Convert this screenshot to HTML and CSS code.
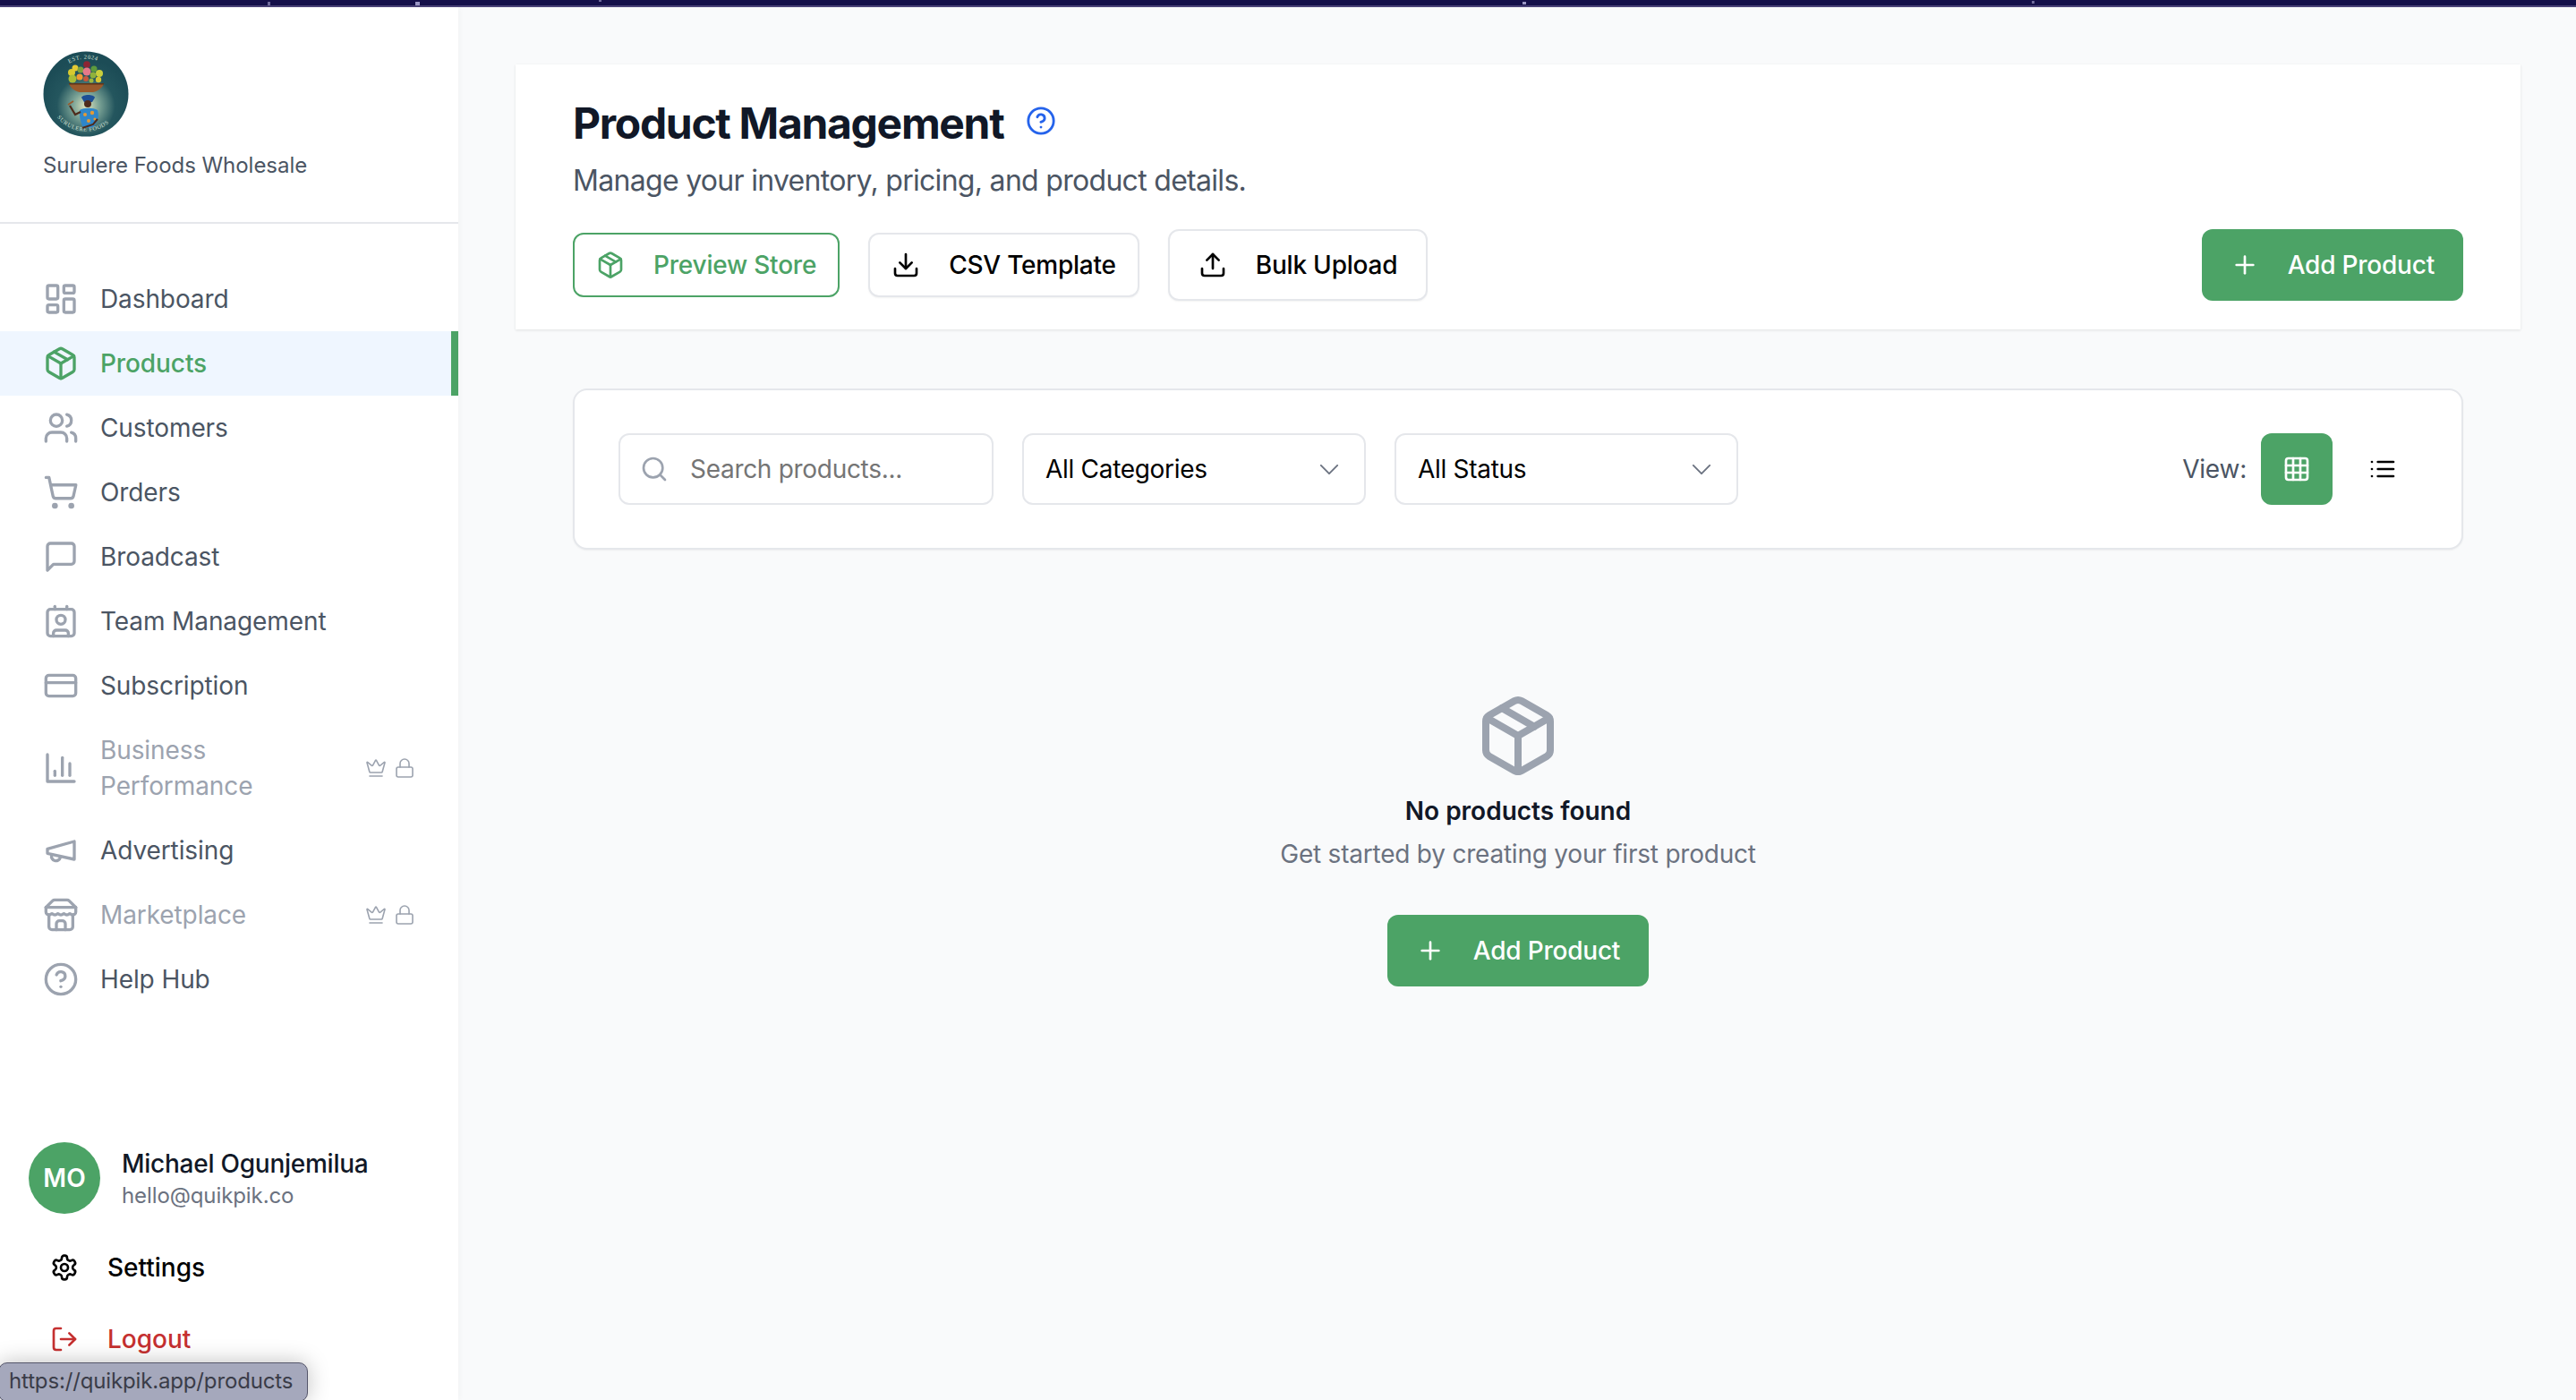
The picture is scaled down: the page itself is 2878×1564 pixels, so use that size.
FILE: index.html
```html
<!DOCTYPE html>
<html lang="en">
<head>
  <meta charset="UTF-8">
  <title>Product Management</title>
  <link rel="stylesheet" href="styles.css">
</head>
<body>
  <div class="top-strip"></div>
  <div class="app">
    <!-- sidebar -->
    <aside class="sidebar">
      <div class="brand">
        <svg class="logo" viewBox="0 0 96 96">
          <defs>
            <radialGradient id="logoBg" cx="50%" cy="64%" r="55%">
              <stop offset="0" stop-color="#dfe4bd"/>
              <stop offset="0.28" stop-color="#7ba396"/>
              <stop offset="0.62" stop-color="#24565e"/>
              <stop offset="1" stop-color="#1c4c56"/>
            </radialGradient>
            <path id="logoTop" d="M18 24A37 37 0 0 1 78 24"/>
            <path id="logoBottom" d="M10 64A41 41 0 0 0 86 64"/>
          </defs>
          <circle cx="48" cy="48" r="47.5" fill="url(#logoBg)"/>
          <text class="logo-text"><textPath href="#logoTop" startOffset="22%">EST. 2024</textPath></text>
          <text class="logo-text"><textPath href="#logoBottom" startOffset="12%">SURULERE FOODS</textPath></text>
          <!-- fruit -->
          <circle cx="32" cy="24" r="4" fill="#d8c92f"/>
          <circle cx="36" cy="19" r="3.5" fill="#e3c934"/>
          <circle cx="33" cy="31" r="4.5" fill="#a9bd36"/>
          <circle cx="49" cy="15" r="3.8" fill="#8c2433"/>
          <circle cx="42" cy="21" r="3.5" fill="#7fa23c"/>
          <circle cx="49" cy="23" r="4.5" fill="#e5798a"/>
          <circle cx="57" cy="20" r="3.5" fill="#5d9b3d"/>
          <circle cx="63" cy="25" r="4" fill="#c9cf3c"/>
          <circle cx="41" cy="29" r="3.6" fill="#ef9a33"/>
          <circle cx="56" cy="27" r="3.4" fill="#8fb13b"/>
          <circle cx="48" cy="31" r="3" fill="#c9573d"/>
          <circle cx="62" cy="32" r="3.2" fill="#d9c834"/>
          <circle cx="54" cy="33" r="2.5" fill="#9fb83d"/>
          <!-- bowl -->
          <path d="M29 36h39c-1 5-7 9-12 10H41c-5-1-11-5-12-10z" fill="#9a5a2c"/>
          <path d="M29 36h39v1.4H29z" fill="#5e3418"/>
          <!-- woman -->
          <path d="M43 52c1-4 14-4 15 0l-3 5h-9z" fill="#1d4f96"/>
          <circle cx="50" cy="59" r="4" fill="#4e2b1b"/>
          <path d="M41 66c5-3 15-3 20 0 2 6 1 13-5 19-4 1-8 1-12-1-2-6-4-12-3-18z" fill="#2f86c9"/>
          <circle cx="47" cy="71" r="2" fill="#e39a35"/>
          <circle cx="55" cy="69" r="2.2" fill="#e39a35"/>
          <circle cx="51" cy="78" r="2" fill="#e39a35"/>
          <circle cx="58" cy="76" r="1.6" fill="#e39a35"/>
          <path d="M42 68l-6 3-6-10" fill="none" stroke="#4e2b1b" stroke-width="2.2"/>
          <path d="M44 86l12-4 5-6" fill="none" stroke="#4e2b1b" stroke-width="2"/>
          <path d="M28 60l6-4" stroke="#9a5a2c" stroke-width="1.6"/>
        </svg>
        <div class="brand-name">Surulere Foods Wholesale</div>
      </div>

      <nav class="nav">
        <a class="nav-item">
          <svg class="ico nav-ico" viewBox="0 0 24 24"><rect x="3" y="3" width="7" height="9" rx="1"/><rect x="14" y="3" width="7" height="5" rx="1"/><rect x="14" y="12" width="7" height="9" rx="1"/><rect x="3" y="16" width="7" height="5" rx="1"/></svg>
          <span>Dashboard</span>
        </a>
        <a class="nav-item active">
          <svg class="ico nav-ico" viewBox="0 0 24 24"><path d="M11 21.73a2 2 0 0 0 2 0l7-4A2 2 0 0 0 21 16V8a2 2 0 0 0-1-1.73l-7-4a2 2 0 0 0-2 0l-7 4A2 2 0 0 0 3 8v8a2 2 0 0 0 1 1.73z"/><path d="M12 22V12"/><path d="M3.29 7 12 12l8.71-5"/><path d="m7.5 4.27 9 5.15"/></svg>
          <span>Products</span>
        </a>
        <a class="nav-item">
          <svg class="ico nav-ico" viewBox="0 0 24 24"><path d="M16 21v-2a4 4 0 0 0-4-4H6a4 4 0 0 0-4 4v2"/><circle cx="9" cy="7" r="4"/><path d="M22 21v-2a4 4 0 0 0-3-3.87"/><path d="M16 3.13a4 4 0 0 1 0 7.75"/></svg>
          <span>Customers</span>
        </a>
        <a class="nav-item">
          <svg class="ico nav-ico" viewBox="0 0 24 24"><circle cx="8" cy="21" r="1"/><circle cx="19" cy="21" r="1"/><path d="M2.05 2.05h2l2.66 12.42a2 2 0 0 0 2 1.58h9.78a2 2 0 0 0 1.95-1.57l1.65-7.43H5.12"/></svg>
          <span>Orders</span>
        </a>
        <a class="nav-item">
          <svg class="ico nav-ico" viewBox="0 0 24 24"><path d="M21 15a2 2 0 0 1-2 2H7l-4 4V5a2 2 0 0 1 2-2h14a2 2 0 0 1 2 2z"/></svg>
          <span>Broadcast</span>
        </a>
        <a class="nav-item">
          <svg class="ico nav-ico" viewBox="0 0 24 24"><path d="M16 2v2"/><path d="M7 22v-2a2 2 0 0 1 2-2h6a2 2 0 0 1 2 2v2"/><path d="M8 2v2"/><circle cx="12" cy="11" r="3"/><rect x="3" y="4" width="18" height="18" rx="2"/></svg>
          <span>Team Management</span>
        </a>
        <a class="nav-item">
          <svg class="ico nav-ico" viewBox="0 0 24 24"><rect x="2" y="5" width="20" height="14" rx="2"/><path d="M2 10h20"/></svg>
          <span>Subscription</span>
        </a>
        <a class="nav-item locked">
          <svg class="ico nav-ico" viewBox="0 0 24 24"><path d="M3 3v18h18"/><path d="M18 17V9"/><path d="M13 17V5"/><path d="M8 17v-3"/></svg>
          <span class="nav-label-wrap">Business Performance</span>
          <span class="lock-icons">
            <svg class="ico small-ico" viewBox="0 0 24 24"><path d="M11.562 3.266a.5.5 0 0 1 .876 0L15.39 8.87a1 1 0 0 0 1.516.294L21.183 5.5a.5.5 0 0 1 .798.519l-2.834 10.246a1 1 0 0 1-.956.734H5.81a1 1 0 0 1-.957-.734L2.02 6.02a.5.5 0 0 1 .798-.519l4.276 3.664a1 1 0 0 0 1.516-.294z"/><path d="M5 21h14"/></svg>
            <svg class="ico small-ico" viewBox="0 0 24 24"><rect x="3" y="11" width="18" height="11" rx="2"/><path d="M7 11V7a5 5 0 0 1 10 0v4"/></svg>
          </span>
        </a>
        <a class="nav-item">
          <svg class="ico nav-ico" viewBox="0 0 24 24"><path d="m3 11 18-5v12L3 14v-3z"/><path d="M11.6 16.8a3 3 0 1 1-5.8-1.6"/></svg>
          <span>Advertising</span>
        </a>
        <a class="nav-item locked">
          <svg class="ico nav-ico" viewBox="0 0 24 24"><path d="m2 7 4.41-4.41A2 2 0 0 1 7.83 2h8.34a2 2 0 0 1 1.42.59L22 7"/><path d="M4 12v8a2 2 0 0 0 2 2h12a2 2 0 0 0 2-2v-8"/><path d="M15 22v-4a2 2 0 0 0-2-2h-2a2 2 0 0 0-2 2v4"/><path d="M2 7h20"/><path d="M22 7v3a2 2 0 0 1-2 2a2.7 2.7 0 0 1-1.59-.63.7.7 0 0 0-.82 0A2.7 2.7 0 0 1 16 12a2.7 2.7 0 0 1-1.59-.63.7.7 0 0 0-.82 0A2.7 2.7 0 0 1 12 12a2.7 2.7 0 0 1-1.59-.63.7.7 0 0 0-.82 0A2.7 2.7 0 0 1 8 12a2.7 2.7 0 0 1-1.59-.63.7.7 0 0 0-.82 0A2.7 2.7 0 0 1 4 12a2 2 0 0 1-2-2V7"/></svg>
          <span>Marketplace</span>
          <span class="lock-icons">
            <svg class="ico small-ico" viewBox="0 0 24 24"><path d="M11.562 3.266a.5.5 0 0 1 .876 0L15.39 8.87a1 1 0 0 0 1.516.294L21.183 5.5a.5.5 0 0 1 .798.519l-2.834 10.246a1 1 0 0 1-.956.734H5.81a1 1 0 0 1-.957-.734L2.02 6.02a.5.5 0 0 1 .798-.519l4.276 3.664a1 1 0 0 0 1.516-.294z"/><path d="M5 21h14"/></svg>
            <svg class="ico small-ico" viewBox="0 0 24 24"><rect x="3" y="11" width="18" height="11" rx="2"/><path d="M7 11V7a5 5 0 0 1 10 0v4"/></svg>
          </span>
        </a>
        <a class="nav-item">
          <svg class="ico nav-ico" viewBox="0 0 24 24"><circle cx="12" cy="12" r="10"/><path d="M9.09 9a3 3 0 0 1 5.83 1c0 2-3 3-3 3"/><path d="M12 17h.01"/></svg>
          <span>Help Hub</span>
        </a>
      </nav>

      <div class="user-box">
        <div class="user-row">
          <div class="avatar">MO</div>
          <div>
            <div class="user-name">Michael Ogunjemilua</div>
            <div class="user-mail">hello@quikpik.co</div>
          </div>
        </div>
        <a class="foot-link">
          <svg class="ico btn-ico" viewBox="0 0 24 24"><path d="M12.22 2h-.44a2 2 0 0 0-2 2v.18a2 2 0 0 1-1 1.73l-.43.25a2 2 0 0 1-2 0l-.15-.08a2 2 0 0 0-2.73.73l-.22.38a2 2 0 0 0 .73 2.73l.15.1a2 2 0 0 1 1 1.72v.51a2 2 0 0 1-1 1.74l-.15.09a2 2 0 0 0-.73 2.73l.22.38a2 2 0 0 0 2.73.73l.15-.08a2 2 0 0 1 2 0l.43.25a2 2 0 0 1 1 1.73V20a2 2 0 0 0 2 2h.44a2 2 0 0 0 2-2v-.18a2 2 0 0 1 1-1.73l.43-.25a2 2 0 0 1 2 0l.15.08a2 2 0 0 0 2.73-.73l.22-.39a2 2 0 0 0-.73-2.73l-.15-.08a2 2 0 0 1-1-1.74v-.5a2 2 0 0 1 1-1.74l.15-.09a2 2 0 0 0 .73-2.73l-.22-.38a2 2 0 0 0-2.73-.73l-.15.08a2 2 0 0 1-2 0l-.43-.25a2 2 0 0 1-1-1.73V4a2 2 0 0 0-2-2z"/><circle cx="12" cy="12" r="3"/></svg>
          <span>Settings</span>
        </a>
        <a class="foot-link logout">
          <svg class="ico btn-ico" viewBox="0 0 24 24"><path d="M9 21H5a2 2 0 0 1-2-2V5a2 2 0 0 1 2-2h4"/><path d="m16 17 5-5-5-5"/><path d="M21 12H9"/></svg>
          <span>Logout</span>
        </a>
      </div>
    </aside>

    <!-- main area -->
    <main class="main">
      <section class="page-head">
        <div class="title-row">
          <h1>Product Management</h1>
          <svg class="ico help-ico" viewBox="0 0 24 24"><circle cx="12" cy="12" r="10"/><path d="M9.09 9a3 3 0 0 1 5.83 1c0 2-3 3-3 3"/><path d="M12 17h.01"/></svg>
        </div>
        <p class="subtitle">Manage your inventory, pricing, and product details.</p>
        <div class="actions">
          <button class="btn btn-outline-green">
            <svg class="ico btn-ico" viewBox="0 0 24 24"><path d="M11 21.73a2 2 0 0 0 2 0l7-4A2 2 0 0 0 21 16V8a2 2 0 0 0-1-1.73l-7-4a2 2 0 0 0-2 0l-7 4A2 2 0 0 0 3 8v8a2 2 0 0 0 1 1.73z"/><path d="M12 22V12"/><path d="M3.29 7 12 12l8.71-5"/><path d="m7.5 4.27 9 5.15"/></svg>
            Preview Store
          </button>
          <button class="btn btn-plain">
            <svg class="ico btn-ico" viewBox="0 0 24 24"><path d="M21 15v4a2 2 0 0 1-2 2H5a2 2 0 0 1-2-2v-4"/><path d="m7 10 5 5 5-5"/><path d="M12 15V3"/></svg>
            CSV Template
          </button>
          <button class="btn btn-plain btn-tall">
            <svg class="ico btn-ico" viewBox="0 0 24 24"><path d="M21 15v4a2 2 0 0 1-2 2H5a2 2 0 0 1-2-2v-4"/><path d="m17 8-5-5-5 5"/><path d="M12 3v12"/></svg>
            Bulk Upload
          </button>
          <button class="btn btn-green push-right">
            <svg class="ico btn-ico" viewBox="0 0 24 24"><path d="M5 12h14"/><path d="M12 5v14"/></svg>
            Add Product
          </button>
        </div>
      </section>

      <section class="content">
        <div class="filters">
          <label class="search">
            <svg class="ico search-ico" viewBox="0 0 24 24"><circle cx="11" cy="11" r="8"/><path d="m21 21-4.3-4.3"/></svg>
            <input type="text" placeholder="Search products...">
          </label>
          <div class="select">
            <span>All Categories</span>
            <svg class="ico chevron" viewBox="0 0 24 12"><path d="M2 1l10 10L22 1"/></svg>
          </div>
          <div class="select">
            <span>All Status</span>
            <svg class="ico chevron" viewBox="0 0 24 12"><path d="M2 1l10 10L22 1"/></svg>
          </div>
          <div class="view-switch">
            <span class="view-label">View:</span>
            <button class="view-btn on">
              <svg class="ico btn-ico" viewBox="0 0 24 24"><rect x="3" y="3" width="18" height="18" rx="2"/><path d="M3 9h18"/><path d="M3 15h18"/><path d="M9 3v18"/><path d="M15 3v18"/></svg>
            </button>
            <button class="view-btn">
              <svg class="ico btn-ico" viewBox="0 0 24 24"><path d="M8 6h13"/><path d="M8 12h13"/><path d="M8 18h13"/><path d="M3 6h.01"/><path d="M3 12h.01"/><path d="M3 18h.01"/></svg>
            </button>
          </div>
        </div>

        <div class="empty">
          <svg class="ico empty-ico" viewBox="0 0 24 24"><path d="M11 21.73a2 2 0 0 0 2 0l7-4A2 2 0 0 0 21 16V8a2 2 0 0 0-1-1.73l-7-4a2 2 0 0 0-2 0l-7 4A2 2 0 0 0 3 8v8a2 2 0 0 0 1 1.73z"/><path d="M12 22V12"/><path d="M3.29 7 12 12l8.71-5"/><path d="m7.5 4.27 9 5.15"/></svg>
          <h3>No products found</h3>
          <p>Get started by creating your first product</p>
          <button class="btn btn-green">
            <svg class="ico btn-ico" viewBox="0 0 24 24"><path d="M5 12h14"/><path d="M12 5v14"/></svg>
            Add Product
          </button>
        </div>
      </section>
    </main>
  </div>

  <div class="link-tip">https://quikpik.app/products</div>
</body>
</html>
```

FILE: styles.css
```css
body, html {
  margin: 0;
  padding: 0;
  width: 100%;
  height: 100%;
  overflow: hidden;
  font-family: Inter, "Liberation Sans", sans-serif;
  background-color: #f9fafb;
}

.top-strip {
  height: 6px;
  background-color: #15104a;
  border-bottom: 2px solid #4a4378;
  background-image:
    linear-gradient(#6f6a9c, #6f6a9c),
    linear-gradient(#9a96c4, #9a96c4),
    linear-gradient(#6f6a9c, #6f6a9c),
    linear-gradient(#9a96c4, #9a96c4),
    linear-gradient(#6f6a9c, #6f6a9c);
  background-size: 3px 4px, 5px 4px, 3px 2px, 4px 3px, 3px 3px;
  background-position: 299px 2px, 464px 2px, 669px 0, 1701px 2px, 2270px 1px;
  background-repeat: no-repeat;
}

.app {
  display: flex;
  height: 1556px;
}

.ico {
  fill: none;
  stroke: currentColor;
  stroke-width: 2;
  stroke-linecap: round;
  stroke-linejoin: round;
  flex: none;
}

/* sidebar */
.sidebar {
  width: 512px;
  flex: none;
  display: flex;
  flex-direction: column;
  background-color: white;
  box-shadow: 1px 0 6px rgba(0, 0, 0, 0.04);
}

.brand {
  padding: 49px 48px 47px;
  border-bottom: 2px solid #e5e7eb;
}

.logo {
  display: block;
  width: 96px;
  height: 96px;
}

.logo-text {
  font-family: "Liberation Serif", serif;
  font-size: 6.5px;
  letter-spacing: 0.6px;
  fill: #d5e0d6;
}

.brand-name {
  margin-top: 16px;
  font-size: 24px;
  line-height: 32px;
  letter-spacing: -0.04px;
  color: #4b5563;
}

.nav {
  padding-top: 48px;
}

.nav-item {
  display: flex;
  align-items: center;
  gap: 24px;
  padding: 16px 48px;
  font-size: 28px;
  line-height: 40px;
  letter-spacing: -0.1px;
  color: #4b5563;
}

.nav-ico {
  width: 40px;
  height: 40px;
  color: #9ca3af;
}

.nav-item.active {
  color: #4ca366;
  font-weight: 500;
  background-color: #eff6ff;
  box-shadow: inset -8px 0 0 #4ca366;
}

.nav-item.active .nav-ico {
  color: #4ca366;
}

.nav-item.locked {
  color: #9ca3af;
}

.nav-label-wrap {
  width: 200px;
}

.lock-icons {
  display: flex;
  gap: 8px;
  margin-left: auto;
  color: #9ca3af;
}

.small-ico {
  width: 24px;
  height: 24px;
  stroke-width: 1.6;
}

.user-box {
  margin-top: auto;
  padding: 0 32px;
}

.user-row {
  display: flex;
  align-items: center;
  gap: 24px;
  margin-bottom: 20px;
}

.avatar {
  width: 80px;
  height: 80px;
  border-radius: 50%;
  display: flex;
  align-items: center;
  justify-content: center;
  background-color: #4ca366;
  color: white;
  font-size: 28px;
  font-weight: 600;
}

.user-name {
  font-size: 28px;
  line-height: 40px;
  font-weight: 500;
  letter-spacing: -0.25px;
  color: #111827;
}

.user-mail {
  font-size: 24px;
  line-height: 32px;
  letter-spacing: -0.1px;
  color: #6b7280;
}

.foot-link {
  display: flex;
  align-items: center;
  gap: 32px;
  height: 80px;
  padding-left: 24px;
  font-size: 28px;
  font-weight: 500;
  color: black;
}

.foot-link.logout {
  color: #c53030;
  margin-bottom: 28px;
}

/* main */
.main {
  flex: 1;
  min-width: 0;
  letter-spacing: -0.22px;
}

.page-head {
  margin: 64px 62px 0 64px;
  padding: 34px 64px 32px;
  background-color: white;
  box-shadow: 0 1px 3px rgba(0, 0, 0, 0.1);
}

.title-row {
  display: flex;
  align-items: center;
  gap: 25px;
}

h1 {
  margin: 0;
  font-size: 48px;
  line-height: 64px;
  font-weight: 700;
  letter-spacing: -1.33px;
  color: #111827;
}

.help-ico {
  width: 34px;
  height: 34px;
  color: #2563eb;
  margin-top: -6px;
}

.subtitle {
  margin: 8px 0 0;
  font-size: 32px;
  line-height: 48px;
  letter-spacing: -0.7px;
  color: #4b5563;
}

.actions {
  display: flex;
  align-items: center;
  gap: 32px;
  margin-top: 30px;
}

.btn {
  display: flex;
  align-items: center;
  gap: 32px;
  height: 72px;
  padding: 0 24px;
  font-family: inherit;
  font-size: 28px;
  font-weight: 500;
  letter-spacing: inherit;
  border-radius: 12px;
  box-sizing: border-box;
  cursor: pointer;
}

.btn-ico {
  width: 32px;
  height: 32px;
}

.btn-outline-green {
  background-color: white;
  border: 2px solid #4ca366;
  color: #4ca366;
}

.btn-plain {
  background-color: white;
  border: 2px solid #e5e7eb;
  color: black;
  box-shadow: 0 1px 2px rgba(0, 0, 0, 0.05);
}

.btn-tall {
  height: 80px;
  padding: 0 32px;
}

.btn-green {
  height: 80px;
  padding: 0 32px;
  background-color: #4ca366;
  border: none;
  color: white;
}

.push-right {
  margin-left: auto;
}

.content {
  margin: 0 126px 0 128px;
  padding-top: 66px;
}

.filters {
  display: flex;
  align-items: center;
  gap: 32px;
  height: 180px;
  padding: 0 48px 0 49px;
  box-sizing: border-box;
  background-color: white;
  border: 2px solid #e5e7eb;
  border-radius: 16px;
  box-shadow: 0 1px 2px rgba(0, 0, 0, 0.05);
}

.search {
  display: flex;
  align-items: center;
  gap: 24px;
  width: 419px;
  height: 80px;
  padding-left: 22px;
  box-sizing: border-box;
  border: 2px solid #e5e7eb;
  border-radius: 12px;
}

.search-ico {
  width: 32px;
  height: 32px;
  color: #9ca3af;
}

.search input {
  flex: 1;
  min-width: 0;
  border: none;
  outline: none;
  padding: 0;
  font-family: inherit;
  font-size: 28px;
  letter-spacing: -0.3px;
  background: transparent;
}

.search input::placeholder {
  color: #757575;
}

.select {
  display: flex;
  align-items: center;
  justify-content: space-between;
  width: 384px;
  height: 80px;
  padding: 0 28px 0 24px;
  box-sizing: border-box;
  border: 2px solid #e5e7eb;
  border-radius: 12px;
  font-size: 28px;
  letter-spacing: -0.3px;
  color: black;
}

.chevron {
  width: 22px;
  height: 11px;
  color: #6b7280;
  stroke-width: 2;
}

.view-switch {
  display: flex;
  align-items: center;
  margin-left: auto;
}

.view-label {
  font-size: 28px;
  color: #4b5563;
  margin-right: 16px;
}

.view-btn {
  width: 80px;
  height: 80px;
  display: flex;
  align-items: center;
  justify-content: center;
  border: none;
  border-radius: 12px;
  background: transparent;
  color: black;
  padding: 0;
  margin-right: 16px;
}

.view-btn:last-child {
  margin-right: 0;
}

.view-btn.on {
  background-color: #4ca366;
  color: white;
}

.empty {
  display: flex;
  flex-direction: column;
  align-items: center;
  padding-top: 160px;
}

.empty-ico {
  width: 96px;
  height: 96px;
  color: #9ca3af;
}

.empty h3 {
  margin: 16px 0 0;
  font-size: 28px;
  line-height: 40px;
  font-weight: 600;
  letter-spacing: 0;
  color: #111827;
}

.empty p {
  margin: 8px 0 48px;
  font-size: 28px;
  line-height: 40px;
  color: #6b7280;
}

/* browser link preview in the corner */
.link-tip {
  position: absolute;
  left: -2px;
  top: 1522px;
  width: 346px;
  height: 44px;
  padding-left: 11px;
  box-sizing: border-box;
  font-size: 24px;
  line-height: 40px;
  letter-spacing: -0.15px;
  color: #3a3c48;
  background-color: #a5a8bc;
  border: 1.5px solid #55566a;
  border-radius: 10px;
  box-shadow: 0 0 24px rgba(0, 0, 0, 0.25);
}
```
